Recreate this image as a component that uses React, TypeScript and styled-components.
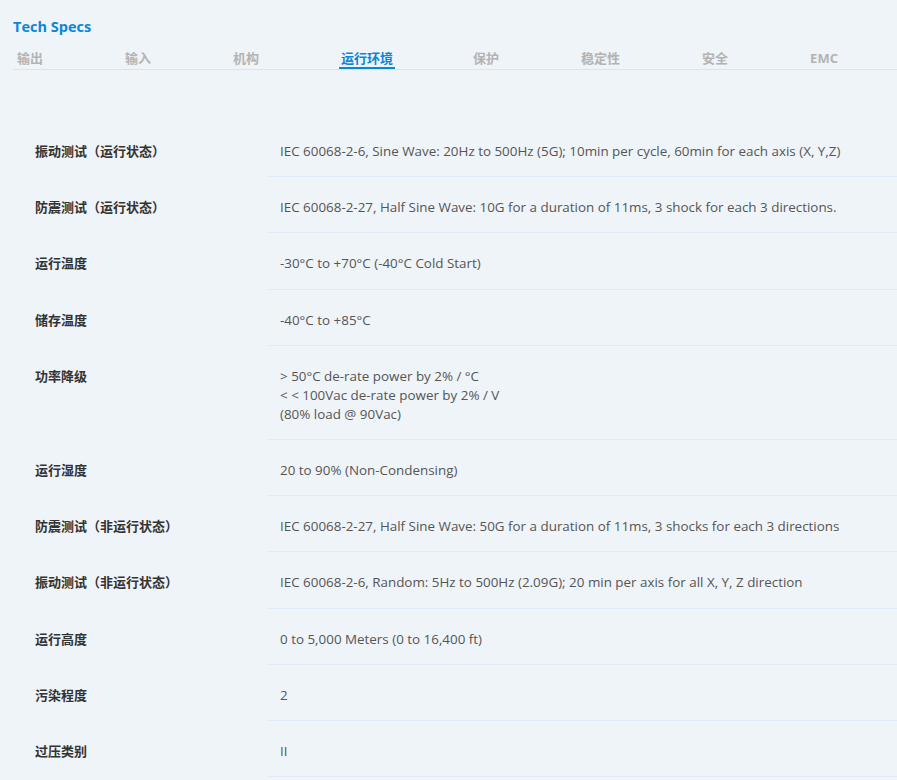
import styled, { createGlobalStyle } from "styled-components";

const GlobalStyle = createGlobalStyle`
  html, body {
    margin: 0;
    padding: 0;
    background: #eff4f9;
  }
  body {
    font-family: "Open Sans", "Noto Sans CJK SC", sans-serif;
  }
`;

const tabs = ["输出", "输入", "机构", "运行环境", "保护", "稳定性", "安全", "EMC"];
const activeTab = "运行环境";

const specs: { label: string; value: string[] }[] = [
  {
    label: "振动测试（运行状态）",
    value: [
      "IEC 60068-2-6, Sine Wave: 20Hz to 500Hz (5G); 10min per cycle, 60min for each axis (X, Y,Z)",
    ],
  },
  {
    label: "防震测试（运行状态）",
    value: [
      "IEC 60068-2-27, Half Sine Wave: 10G for a duration of 11ms, 3 shock for each 3 directions.",
    ],
  },
  { label: "运行温度", value: ["-30°C to +70°C (-40°C Cold Start)"] },
  { label: "储存温度", value: ["-40°C to +85°C"] },
  {
    label: "功率降级",
    value: [
      "> 50°C de-rate power by 2% / °C",
      "< < 100Vac de-rate power by 2% / V",
      "(80% load @ 90Vac)",
    ],
  },
  { label: "运行湿度", value: ["20 to 90% (Non-Condensing)"] },
  {
    label: "防震测试（非运行状态）",
    value: [
      "IEC 60068-2-27, Half Sine Wave: 50G for a duration of 11ms, 3 shocks for each 3 directions",
    ],
  },
  {
    label: "振动测试（非运行状态）",
    value: [
      "IEC 60068-2-6, Random: 5Hz to 500Hz (2.09G); 20 min per axis for all X, Y, Z direction",
    ],
  },
  { label: "运行高度", value: ["0 to 5,000 Meters (0 to 16,400 ft)"] },
  { label: "污染程度", value: ["2"] },
  { label: "过压类别", value: ["II"] },
];

export default function App() {
  return (
    <>
      <GlobalStyle />
      <Page>
        <Title>Tech Specs</Title>

        {/* tabs */}
        <TabBar>
          {tabs.map((t) => (
            <Tab key={t} $active={t === activeTab}>
              {t}
            </Tab>
          ))}
        </TabBar>

        {/* spec table */}
        <SpecTable>
          {specs.map((s) => (
            <Row key={s.label}>
              <Label>{s.label}</Label>
              <Value>
                {s.value.map((line, i) => (
                  <div key={i}>{line}</div>
                ))}
              </Value>
            </Row>
          ))}
        </SpecTable>
      </Page>
    </>
  );
}

const Page = styled.div`
  padding: 17px 0 0 13px;
`;

const Title = styled.h2`
  margin: 0;
  font-size: 14.5px;
  line-height: 20px;
  font-weight: 700;
  color: #0a86d8;
`;

const TabBar = styled.div`
  display: flex;
  gap: 82px;
  margin-top: 12px;
  padding-left: 4px;
  border-bottom: 1px solid #dde3ea;
`;

const Tab = styled.div<{ $active?: boolean }>`
  font-size: 13px;
  line-height: 18px;
  font-weight: 700;
  color: ${({ $active }) => ($active ? "#0a86d8" : "#b3b3b3")};
  border-bottom: 2px solid ${({ $active }) => ($active ? "#0a86d8" : "transparent")};
  margin: 0 ${({ $active }) => ($active ? "-4px" : "-2px")} 0 -2px;
  padding: 0 2px;
  cursor: pointer;
`;

const SpecTable = styled.div`
  margin-top: 51px;
  display: flex;
  flex-direction: column;
`;

const Row = styled.div`
  display: grid;
  grid-template-columns: 255px 1fr;
`;

const Label = styled.div`
  padding: 21px 0 15.2px 22px;
  font-size: 13px;
  line-height: 19px;
  font-weight: 700;
  color: #333;
`;

const Value = styled.div`
  padding: 21px 0 15.2px 12px;
  font-size: 13.4px;
  line-height: 19px;
  color: #555;
  border-bottom: 1px solid #dfebf7;
`;
